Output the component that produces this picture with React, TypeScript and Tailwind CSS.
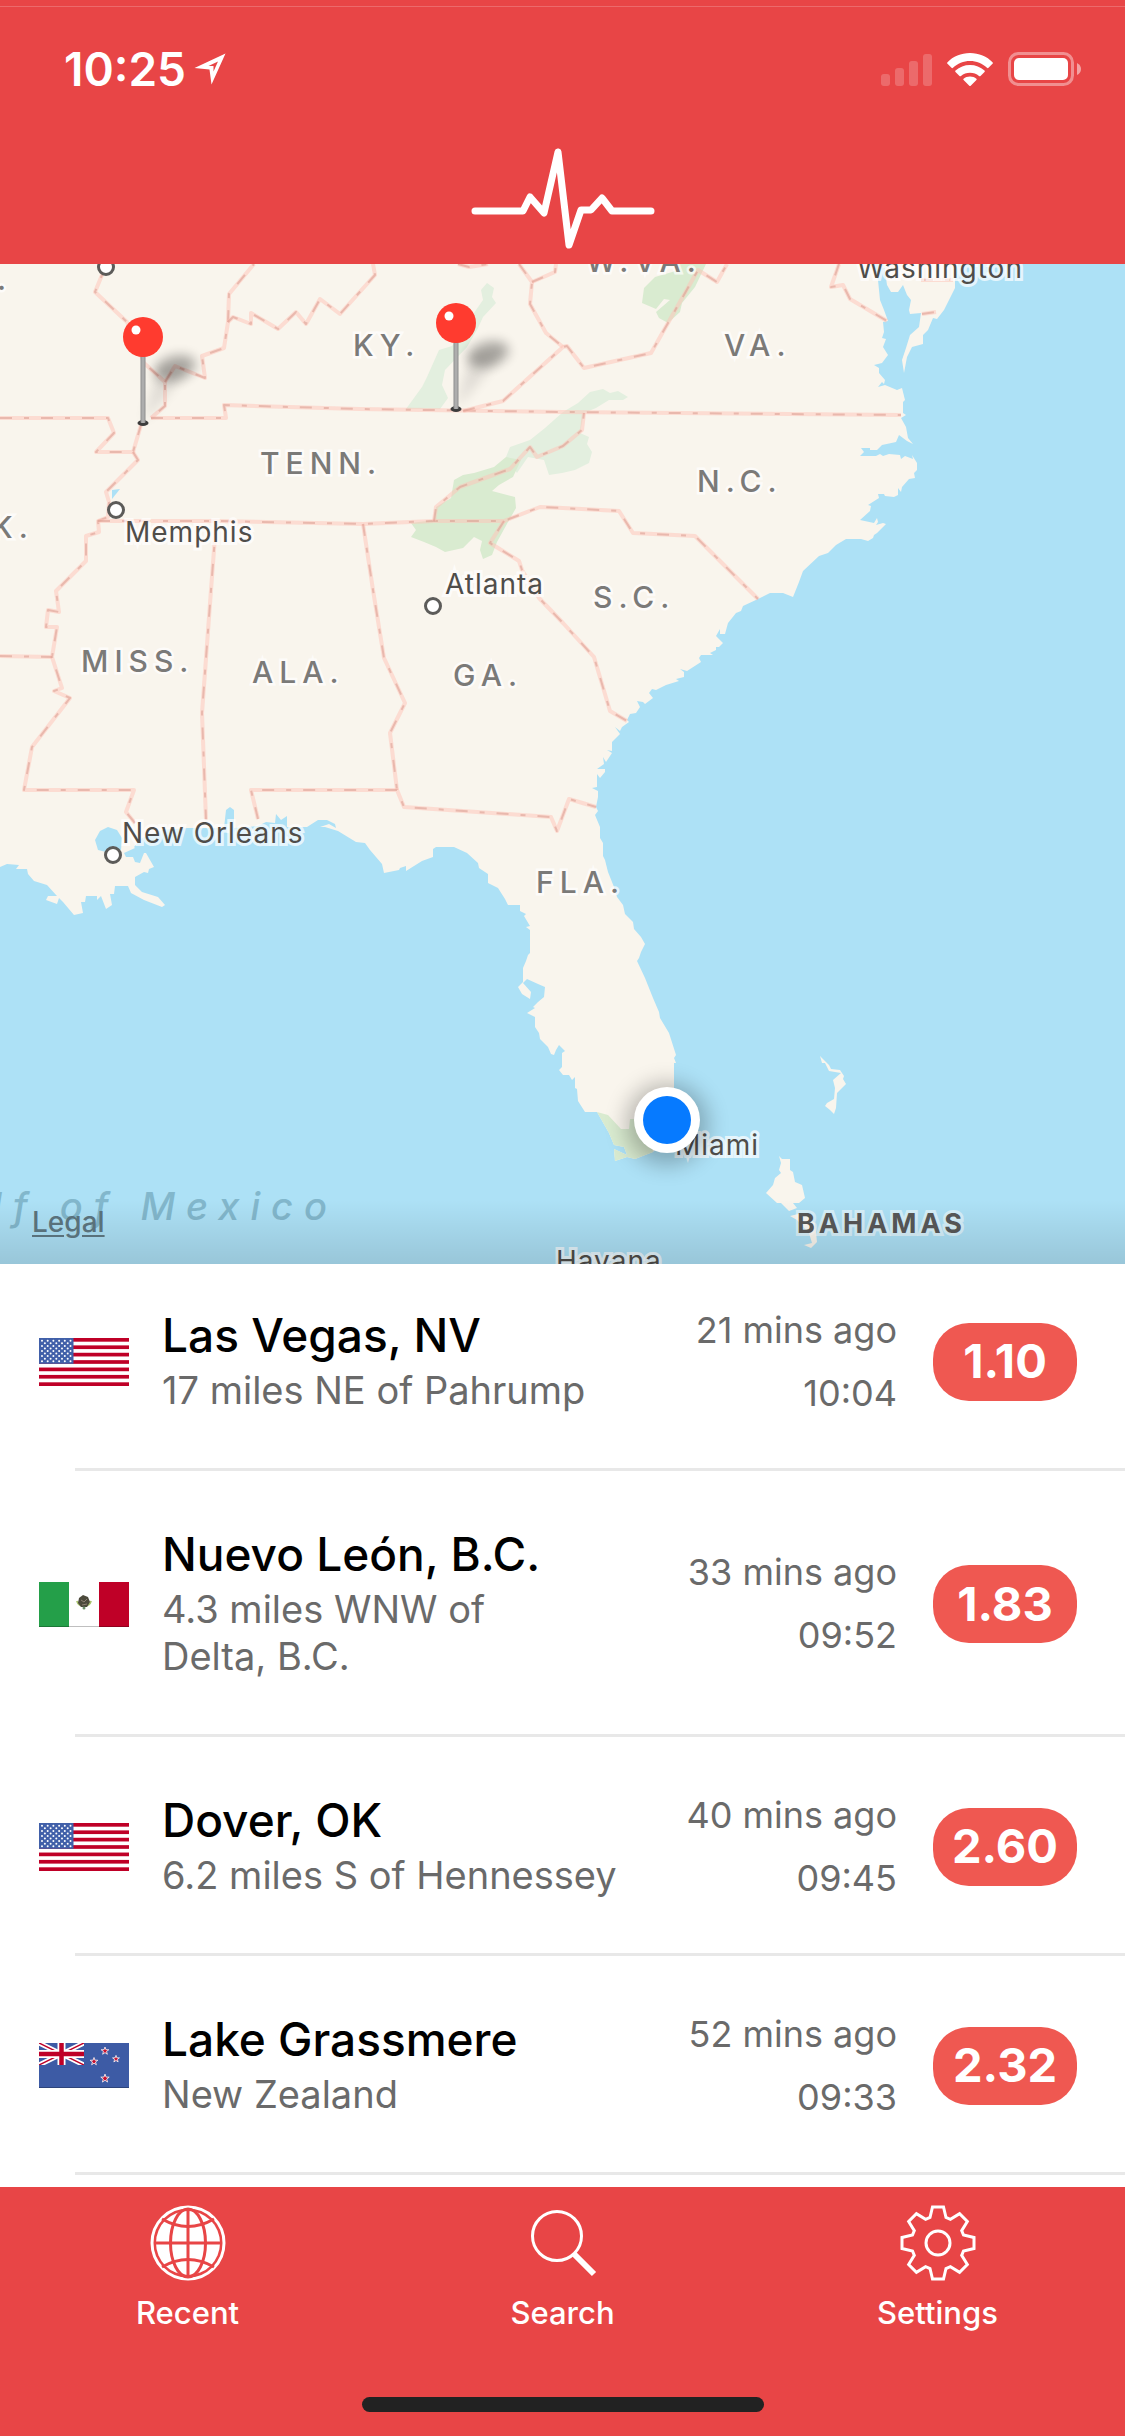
import { useState, type ReactNode } from "react";

type Country = "us" | "mx" | "nz";

type Quake = {
  id: number;
  country: Country;
  place: string;
  detail: string;
  ago: string;
  time: string;
  magnitude: string;
};

const quakes: Quake[] = [
  { id: 1, country: "us", place: "Las Vegas, NV", detail: "17 miles NE of Pahrump", ago: "21 mins ago", time: "10:04", magnitude: "1.10" },
  { id: 2, country: "mx", place: "Nuevo León, B.C.", detail: "4.3 miles WNW of Delta,\u00a0B.C.", ago: "33 mins ago", time: "09:52", magnitude: "1.83" },
  { id: 3, country: "us", place: "Dover, OK", detail: "6.2 miles S of Hennessey", ago: "40 mins ago", time: "09:45", magnitude: "2.60" },
  { id: 4, country: "nz", place: "Lake Grassmere", detail: "New Zealand", ago: "52 mins ago", time: "09:33", magnitude: "2.32" },
];

/* ---------- map data ---------- */

const mainland =
  "M0 264 L872 264 878 280 880 300 884 310 888 321 883 322 884 332 882 338 886 339 883 347 888 355 882 363 874 365 879 368 879 373 885 380 884 384 882 382 878 387 885 385 897 390 902 388 905 400 903 402 903 413 906 415 901 418 906 427 908 438 913 444 907 441 899 435 896 442 882 445 877 450 870 450 870 448 861 448 864 452 860 456 876 456 880 454 883 456 889 454 900 455 901 459 905 456 913 459 912 455 917 463 917 470 914 473 915 478 909 479 902 487 901 492 898 488 898 495 894 497 885 496 884 494 878 494 879 498 868 505 871 506 870 511 860 520 874 523 877 518 878 522 876 525 883 523 886 524 877 533 874 535 873 538 868 541 861 539 846 539 836 545 828 553 819 556 803 571 799 582 793 597 783 593 770 593 758 599 743 606 741 611 736 613 728 623 725 634 720 634 720 629 716 636 723 643 719 647 716 647 716 650 710 653 713 655 701 655 699 658 701 662 687 671 680 669 684 672 684 677 676 679 679 681 666 685 656 690 652 689 649 693 653 698 645 704 643 702 637 701 640 707 636 713 630 714 627 720 629 722 622 727 620 731 615 727 620 734 612 742 612 751 607 750 612 753 606 762 603 757 604 764 597 769 605 769 605 772 600 778 597 774 597 787 592 788 598 791 598 797 596 807 598 811 595 815 600 827 600 838 603 843 603 856 605 860 608 872 614 887 617 897 623 905 625 914 633 922 634 929 641 937 645 944 641 952 639 958 637 961 645 978 653 998 659 1012 660 1018 669 1033 676 1055 674 1058 676 1063 674 1063 674 1088 673 1127 653 1152 635 1159 627 1157 615 1161 614 1149 627 1155 624 1147 614 1145 609 1133 597 1112 585 1112 578 1101 577 1089 575 1088 575 1077 572 1080 569 1075 563 1075 559 1070 562 1067 562 1053 565 1051 559 1045 556 1050 554 1055 551 1054 548 1047 540 1039 539 1033 535 1027 535 1017 527 1013 535 1008 533 1007 538 1002 544 997 545 987 538 984 527 979 523 983 531 992 530 999 522 994 518 987 523 982 523 968 526 961 528 955 530 953 530 930 526 927 530 926 524 916 526 914 520 911 520 905 508 905 505 899 498 888 488 883 488 874 479 868 478 863 467 853 454 847 436 847 433 849 433 857 422 861 406 871 406 866 400 868 399 870 384 873 382 864 370 850 365 843 356 842 338 831 325 827 320 827 329 824 336 828 335 824 327 820 318 820 307 827 287 827 287 816 281 820 276 814 275 823 266 822 258 826 234 828 234 810 230 807 226 810 224 828 187 828 162 830 142 838 134 847 135 848 124 853 126 857 133 857 135 862 140 863 144 853 146 853 154 867 149 869 148 873 144 872 135 877 135 885 142 892 158 897 165 905 162 907 144 900 131 893 128 886 115 886 114 894 110 894 112 905 106 909 101 896 97 900 97 896 86 896 85 902 81 902 83 913 74 915 63 902 59 898 57 904 46 900 48 896 57 896 47 885 34 881 28 874 27 869 16 869 19 865 7 864 0 867Z";

const islands = [
  "M884 264 L887 285 891 292 898 292 903 285 907 295 911 300 909 310 910 314 921 313 919 327 910 335 906 348 902 360 904 373 907 357 912 347 923 344 923 335 928 330 933 318 937 319 944 310 955 288 955 280 958 264Z",
  "M820 1056 L829 1065 831 1069 840 1070 844 1076 843 1079 846 1084 837 1093 836 1108 834 1114 830 1110 825 1106 827 1103 834 1099 835 1088 833 1080 841 1073 829 1071 825 1063 822 1063Z",
  "M779 1156 L782 1159 790 1159 790 1170 793 1172 795 1182 802 1185 805 1198 799 1203 793 1203 797 1208 789 1211 781 1203 777 1203 766 1193 773 1185 775 1178 781 1173 779 1170 781 1163Z",
  "M790 1216 L802 1213 815 1223 817 1242 811 1248 804 1245 812 1243 809 1233 797 1220Z",
];

const lakes = [
  "M108 827 L117 830 122 838 121 850 110 853 98 850 95 840 100 831Z",
  "M120 489 L112 490 112 499Z",
];

const lightParks = [
  "M487 283 L494 288 492 297 496 303 483 317 478 328 467 347 445 370 442 385 448 398 440 409 406 409 422 387 427 377 439 350 452 346 476 310 483 300 481 290Z",
  "M506 457 L510 447 530 440 545 428 563 412 578 403 590 392 603 389 610 393 618 391 628 397 623 400 609 400 596 408 584 413 580 433 589 437 587 444 592 452 589 463 575 470 562 473 549 475 544 460 528 457 517 473Z",
];

const parks = [
  "M411 523 L434 520 436 507 451 498 454 480 463 475 474 473 494 467 506 457 521 460 513 477 499 485 492 491 515 497 516 508 508 522 497 542 492 555 483 559 480 550 482 541 474 537 463 548 445 552 436 547 424 542 411 537 416 530Z",
  "M655 277 L679 270 677 264 706 264 695 287 682 303 680 312 668 323 659 318 656 312 670 300 664 299 656 309 642 303 644 288Z",
  "M597 1112 L608 1115 621 1129 629 1129 630 1119 648 1119 653 1152 635 1159 627 1157 615 1161 614 1149 627 1155 624 1147 614 1145 609 1133Z",
];

const borders = [
  "M106 267 L102 275 95 292 127 322 144 363 165 382 165 406 151 418",
  "M165 382 L175 366 205 378 202 356 224 348 228 322 229 294 254 264",
  "M228 322 L233 317 251 324 251 313 278 329 296 312 306 324 320 299 340 314 375 275 373 264",
  "M0 418 L108 418 114 433 96 452 133 452 141 425",
  "M133 452 L138 460 106 492 109 502 108 517 98 521 99 532 86 536 86 561 56 591 59 612 48 610 46 627 57 627 52 657 62 688 54 691 70 698 32 747 24 790 134 790 126 812 135 823",
  "M0 656 L52 657",
  "M151 418 L226 418 224 405 359 409 563 412 901 415",
  "M98 521 L216 521 363 524 434 521 504 521 540 507 563 508 619 511 633 533 695 536 758 599",
  "M216 523 L211 590 202 713 206 820",
  "M363 524 L373 590 384 658 405 703 390 733 397 790",
  "M258 819 L251 790 397 790 404 807 551 817 557 831 569 799 596 807",
  "M504 521 L490 543 519 561 522 570 539 598 563 623 594 657 610 711 627 721",
  "M434 521 L436 507 460 487 510 469 530 447 537 457 563 446 582 430 584 413",
  "M463 411 L503 401 563 347 567 346 584 368 651 353 698 270 717 282 727 264",
  "M519 264 L532 282 530 304 546 333 563 347",
  "M532 282 L555 272 556 264",
  "M458 264 L469 267 488 264",
  "M839 264 L831 287 843 285 850 299 887 321",
  "M921 280 L953 280",
  "M922 314 L936 312",
];

const cityDots = [
  { x: 106, y: 267 },
  { x: 116, y: 510 },
  { x: 433, y: 606 },
  { x: 113, y: 855 },
];

const stateLabels = [
  { x: 586, y: 272, text: "W.VA." },
  { x: 353, y: 356, text: "KY." },
  { x: 724, y: 356, text: "VA." },
  { x: 260, y: 474, text: "TENN." },
  { x: 697, y: 492, text: "N.C." },
  { x: 593, y: 608, text: "S.C." },
  { x: 81, y: 672, text: "MISS." },
  { x: 252, y: 683, text: "ALA." },
  { x: 453, y: 686, text: "GA." },
  { x: 536, y: 893, text: "FLA." },
  { x: -8, y: 538, text: "K." },
  { x: -3, y: 290, text: "." },
];

const cityLabels = [
  { x: 857, y: 278, text: "Washington" },
  { x: 125, y: 542, text: "Memphis" },
  { x: 445, y: 594, text: "Atlanta" },
  { x: 122, y: 843, text: "New Orleans" },
  { x: 675, y: 1155, text: "Miami" },
  { x: 556, y: 1271, text: "Havana" },
];

function Pin({ x, y }: { x: number; y: number }) {
  return (
    <g transform={`translate(${x} ${y})`}>
      <path d="M0 0 L14 -52 44 -52Z" fill="#000" opacity="0.1" filter="url(#soft)" />
      <ellipse cx="32" cy="-55" rx="21" ry="12" transform="rotate(-15 32 -55)" fill="#000" opacity="0.32" filter="url(#soft)" />
      <ellipse cx="0" cy="0" rx="5.5" ry="3" fill="#3c3c3c" />
      <rect x="-2.5" y="-70" width="5" height="70" rx="1" fill="#8e8e8e" />
      <rect x="-1.5" y="-66" width="3" height="66" fill="#adadad" />
      <circle cx="0" cy="-86" r="20" fill="#ff3b2f" />
      <circle cx="-7" cy="-93" r="4.500" fill="#fff" />
    </g>
  );
}

function QuakeMap() {
  return (
    <section aria-label="Map" className="relative overflow-hidden bg-[#ade1f6]">
      <svg viewBox="0 264 1125 1000" className="block h-auto w-full">
        <defs>
          <filter id="soft" x="-50%" y="-50%" width="200%" height="200%">
            <feGaussianBlur stdDeviation="6" />
          </filter>
          <filter id="halo" x="-50%" y="-50%" width="200%" height="200%">
            <feGaussianBlur stdDeviation="11" />
          </filter>
        </defs>

        <g fill="#f9f5ed">
          <path d={mainland} />
          {islands.map((d) => (
            <path key={d} d={d} />
          ))}
        </g>
        {lightParks.map((d) => (
          <path key={d} d={d} fill="#e3efdf" />
        ))}
        {parks.map((d) => (
          <path key={d} d={d} fill="#d9ebd0" />
        ))}
        {lakes.map((d) => (
          <path key={d} d={d} fill="#ade1f6" />
        ))}

        <g fill="none" strokeLinejoin="round">
          {borders.map((d) => (
            <g key={d}>
              <path d={d} stroke="#ffc4b8" strokeOpacity="0.5" strokeWidth="4" />
              <path d={d} stroke="#d89a8e" strokeOpacity="0.55" strokeWidth="2" strokeDasharray="12 12 5 12" />
            </g>
          ))}
        </g>

        <text x="338" y="1220" textAnchor="end" className="fill-[#82b7cc] text-[38px] font-medium tracking-[11px] italic">
          Gulf of Mexico
        </text>

        {cityDots.map((dot) => (
          <circle key={`${dot.x}-${dot.y}`} cx={dot.x} cy={dot.y} r="7.500" fill="#fff" stroke="#5c5b59" strokeWidth="3" />
        ))}

        <g className="fill-[#7b7a78] stroke-white/70 text-[30px] font-medium tracking-[6px] [paint-order:stroke]" strokeWidth="5">
          {stateLabels.map((label) => (
            <text key={label.text} x={label.x} y={label.y}>
              {label.text}
            </text>
          ))}
        </g>
        <g className="fill-[#4f4d4a] stroke-white/70 text-[28px] tracking-[1px] [paint-order:stroke]" strokeWidth="6">
          {cityLabels.map((label) => (
            <text key={label.text} x={label.x} y={label.y}>
              {label.text}
            </text>
          ))}
        </g>
        <text
          x="797"
          y="1233"
          strokeWidth="6"
          className="fill-[#585858] stroke-white/50 text-[27px] font-bold tracking-[4px] [paint-order:stroke]"
        >
          BAHAMAS
        </text>

        <Pin x={143} y={423} />
        <Pin x={456} y={409} />

        <circle cx="667" cy="1124" r="41" fill="#000" opacity="0.26" filter="url(#halo)" />
        <circle cx="667" cy="1120" r="33" fill="#fff" />
        <circle cx="667" cy="1120" r="24" fill="#067aff" />
      </svg>

      <div className="pointer-events-none absolute inset-x-0 bottom-0 h-16 bg-linear-to-b from-transparent to-black/12" />
      <a href="#legal" className="absolute bottom-[26px] left-8 text-[28px] leading-8 font-medium text-[#59717b] underline underline-offset-3">
        Legal
      </a>
    </section>
  );
}

/* ---------- status bar ---------- */

function StatusBar() {
  return (
    <div className="flex items-center justify-between pt-[34px] pr-11 pl-16">
      <div className="flex items-center gap-2">
        <span className="text-[46px] leading-[56px] font-semibold">10:25</span>
        <svg viewBox="0 0 32 32" className="size-8" fill="#fff" fillRule="evenodd">
          <path d="M31.500 0.500 L0.500 15 L15.500 16.500 L17.500 31.500Z M24 8.500 L19.500 18.500 V13 H14.500Z" />
        </svg>
      </div>
      <div className="flex items-center gap-[15px]">
        <svg viewBox="0 0 51 33" className="h-[33px] w-[51px]" fill="#fff" opacity="0.2">
          <rect x="0" y="21" width="9" height="12" rx="3" />
          <rect x="14" y="15" width="9" height="18" rx="3" />
          <rect x="28" y="8" width="9" height="25" rx="3" />
          <rect x="42" y="1" width="9" height="32" rx="3" />
        </svg>
        <svg viewBox="0 0 46 33" className="h-[33px] w-[46px]" fill="#fff">
          <path d="M23 0 C32 0 40 3.500 45.500 9.200 Q46.300 10 45.500 10.800 L41.500 14.800 Q40.700 15.500 40 14.800 C35.500 10.500 29.500 8 23 8 C16.500 8 10.500 10.500 6 14.800 Q5.300 15.500 4.500 14.800 L.5 10.800 Q-.3 10 .5 9.200 C6 3.500 14 0 23 0Z" />
          <path d="M23 12 C28.500 12 33.500 14 37.500 17.500 Q38.300 18.300 37.500 19.100 L33.500 23 Q32.800 23.700 32 23 C29.500 21 26.500 19.800 23 19.800 C19.500 19.800 16.500 21 14 23 Q13.200 23.700 12.500 23 L8.500 19.100 Q7.700 18.300 8.500 17.500 C12.500 14 17.500 12 23 12Z" />
          <path d="M23 23.500 C25.500 23.500 27.700 24.400 29.400 25.800 Q30 26.400 29.400 27 L23.700 32.700 Q23 33.300 22.300 32.700 L16.600 27 Q16 26.400 16.600 25.800 C18.300 24.400 20.500 23.500 23 23.500Z" />
        </svg>
        <svg viewBox="0 0 73 34" className="h-[34px] w-[73px]">
          <rect x="1.500" y="1.500" width="63" height="31" rx="9" fill="none" stroke="#fff" strokeOpacity="0.4" strokeWidth="3" />
          <rect x="6" y="6" width="54" height="22" rx="5" fill="#fff" />
          <path d="M69 11 Q73 13 73 17 Q73 21 69 23Z" fill="#fff" fillOpacity="0.5" />
        </svg>
      </div>
    </div>
  );
}

function PulseLogo() {
  return (
    <svg viewBox="0 0 186 104" className="h-[104px] w-[186px]" role="img" aria-label="Earthquakes">
      <path
        d="M5 65 H53 L60 51 74 67 88 6 99 99 111 64 H121 L132 52 142 65 H181"
        fill="none"
        stroke="#fff"
        strokeWidth="7"
        strokeLinecap="round"
        strokeLinejoin="round"
      />
    </svg>
  );
}

/* ---------- flags ---------- */

function starPoints(cx: number, cy: number, r: number) {
  return Array.from({ length: 10 }, (_, i) => {
    const radius = i % 2 ? r * 0.4 : r;
    const angle = (i * Math.PI) / 5;
    return `${cx + radius * Math.sin(angle)},${cy - radius * Math.cos(angle)}`;
  }).join(" ");
}

function UsFlag() {
  return (
    <svg viewBox="0 0 90 48" className="block h-12 w-full" role="img" aria-label="United States">
      <rect width="90" height="48" fill="#fff" />
      {Array.from({ length: 7 }, (_, i) => (
        <rect key={i} y={(i * 96) / 13} width="90" height={48 / 13} fill="#bf0027" />
      ))}
      <rect width="34.500" height="25.800" fill="#4160a9" />
      {Array.from({ length: 9 }, (_, row) =>
        Array.from({ length: row % 2 ? 5 : 6 }, (_, col) => (
          <circle key={`${row}-${col}`} cx={(row % 2 ? 5.9 : 3) + col * 5.7} cy={2.8 + row * 2.55} r="1" fill="#fff" />
        )),
      )}
    </svg>
  );
}

function MxFlag() {
  return (
    <svg viewBox="0 0 90 45" className="block h-[45px] w-full" role="img" aria-label="Mexico">
      <rect width="90" height="45" fill="#fff" />
      <rect width="30" height="45" fill="#249f49" />
      <rect x="60" width="30" height="45" fill="#bf0027" />
      <path d="M0 44.500 H90" stroke="#000" strokeOpacity="0.25" />
      <path d="M38 19 A7.300 7 0 0 0 52 19" fill="none" stroke="#a9c46c" strokeWidth="2" />
      <path d="M40 16 L44 13 49 15 51 20 48 25 42 25 39 21Z" fill="#4c4a3c" />
      <path d="M42 18 l3 2 3 -3 M43 23 l5 -1" stroke="#8d8074" fill="none" />
      <circle cx="45" cy="26" r="1.500" fill="#6c8f6a" />
    </svg>
  );
}

function NzFlag() {
  return (
    <svg viewBox="0 0 90 45" className="block h-[45px] w-full" role="img" aria-label="New Zealand">
      <clipPath id="jack">
        <rect width="45" height="22" />
      </clipPath>
      <rect width="90" height="45" fill="#3d5ba5" />
      <g clipPath="url(#jack)">
        <path d="M0 0 L45 22 M45 0 L0 22" stroke="#fff" strokeWidth="5" />
        <path d="M0 0 L45 22 M45 0 L0 22" stroke="#bf0027" strokeWidth="1.500" />
        <path d="M22.500 0 V22 M0 11 H45" stroke="#fff" strokeWidth="8" />
        <path d="M22.500 0 V22 M0 11 H45" stroke="#bf0027" strokeWidth="4.500" />
      </g>
      <g fill="#c8102e" stroke="#fff" strokeWidth="0.800">
        <polygon points={starPoints(66, 8, 4)} />
        <polygon points={starPoints(55, 18.5, 4)} />
        <polygon points={starPoints(77, 16, 3.6)} />
        <polygon points={starPoints(66, 35.5, 4.4)} />
      </g>
      <path d="M0 44.500 H90" stroke="#000" strokeOpacity="0.25" />
    </svg>
  );
}

const flags: Record<Country, ReactNode> = {
  us: <UsFlag />,
  mx: <MxFlag />,
  nz: <NzFlag />,
};

/* ---------- list ---------- */

function QuakeRow({ quake }: { quake: Quake }) {
  return (
    <li>
      <div className="flex items-center pt-[54px] pr-12 pb-[51px] pl-[39px]">
        <div className="mr-[33px] w-[90px] shrink-0">{flags[quake.country]}</div>
        <div className="min-w-0 flex-1 pb-[3px]">
          <h2 className="mb-[3px] text-[46px] leading-[58px] font-medium text-black">{quake.place}</h2>
          <p className="text-[38px] leading-[47px] text-[#6a6a6a]">{quake.detail}</p>
        </div>
        <div className="-my-10 ml-6 shrink-0 text-right text-[36px] leading-[63px] text-[#6a6a6a]">
          <p>{quake.ago}</p>
          <p>{quake.time}</p>
        </div>
        <span className="ml-9 flex h-[78px] w-36 shrink-0 items-center justify-center rounded-[36px] bg-[#ef5851] text-[47px] font-bold text-white">
          {quake.magnitude}
        </span>
      </div>
      <div className="ml-[75px] h-[3px] bg-[#e8e8e8]" />
    </li>
  );
}

/* ---------- tab bar ---------- */

function GlobeIcon() {
  return (
    <svg viewBox="0 0 76 76" className="size-[76px]" fill="none">
      <circle cx="38" cy="38" r="36" stroke="#fff" strokeWidth="3" />
      <circle cx="38" cy="38" r="32" fill="#fff" />
      <g stroke="#e84546" strokeWidth="3">
        <path d="M38 4 V72 M4 38 H72" />
        <ellipse cx="38" cy="38" rx="17.500" ry="34" />
        <path d="M12 14 Q38 29 64 14 M12 62 Q38 47 64 62" />
      </g>
    </svg>
  );
}

function SearchIcon() {
  return (
    <svg viewBox="0 0 76 76" className="size-[76px]" fill="none" stroke="#fff">
      <circle cx="32" cy="31" r="24.500" strokeWidth="3" />
      <path d="M49 49 L69 69" strokeWidth="6" />
    </svg>
  );
}

const tooth = [
  [-8, -25.5],
  [-5.5, -36],
  [5.5, -36],
  [8, -25.5],
];

const gearPoints = Array.from({ length: 8 }, (_, i) => {
  const a = (i * Math.PI) / 4;
  return tooth
    .map(([x, y]) => `${38 + x * Math.cos(a) - y * Math.sin(a)},${38 + x * Math.sin(a) + y * Math.cos(a)}`)
    .join(" ");
}).join(" ");

function GearIcon() {
  return (
    <svg viewBox="0 0 76 76" className="size-[76px]" fill="none" stroke="#fff" strokeWidth="3">
      <polygon points={gearPoints} />
      <circle cx="38" cy="38" r="12" />
    </svg>
  );
}

const tabs = [
  { name: "Recent", icon: <GlobeIcon /> },
  { name: "Search", icon: <SearchIcon /> },
  { name: "Settings", icon: <GearIcon /> },
];

export default function App() {
  const [active, setActive] = useState("Recent");

  return (
    <div className="flex min-h-screen flex-col bg-white font-['Inter','Liberation_Sans',sans-serif]">
      <header className="bg-[#e84546] pt-[6px] pb-[14px] text-white">
        <div className="h-px bg-white/20" />
        <StatusBar />
        <div className="mt-[49px] flex justify-center">
          <PulseLogo />
        </div>
      </header>

      <QuakeMap />

      {/* list sits slightly scrolled under the map */}
      <main className="flex-1 overflow-hidden bg-white pb-3">
        <ul className="-mt-3">
          {quakes.map((quake) => (
            <QuakeRow key={quake.id} quake={quake} />
          ))}
        </ul>
      </main>

      <footer className="bg-[#e84546] pt-[18px] pb-6 text-white">
        <nav className="grid grid-cols-3">
          {tabs.map((tab) => (
            <button
              key={tab.name}
              type="button"
              aria-current={active === tab.name ? "page" : undefined}
              onClick={() => setActive(tab.name)}
              className="flex flex-col items-center gap-[14px]"
            >
              {tab.icon}
              <span className="text-[31px] leading-9 font-medium">{tab.name}</span>
            </button>
          ))}
        </nav>
        <div className="mx-auto mt-[66px] h-[15px] w-[402px] rounded-full bg-[#222]" />
      </footer>
    </div>
  );
}
